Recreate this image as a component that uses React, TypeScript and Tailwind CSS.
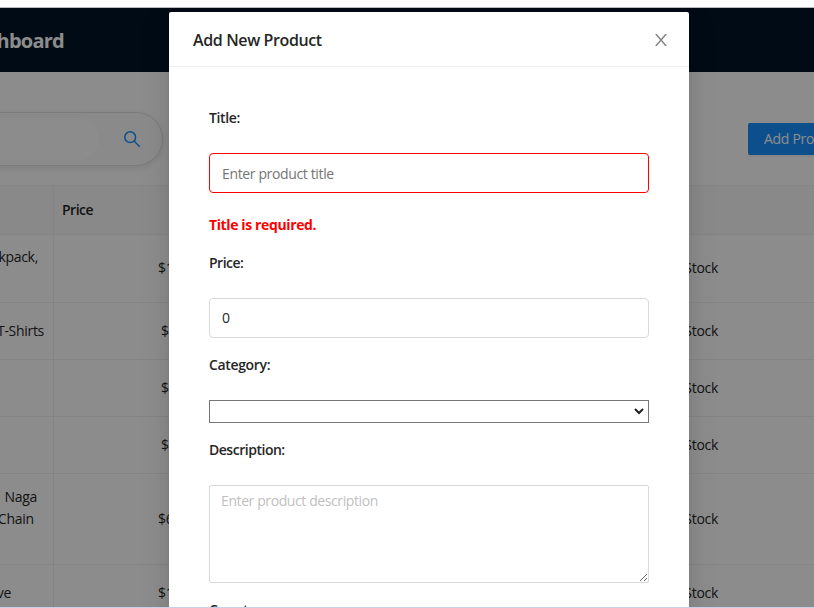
import React from "react";

type Row = { height: string; title: string[]; align: string; price: string; pricePad: string };

const rows: Row[] = [
  { height: "h-[69px]", title: ["kpack,", "\u00a0"], align: "pr-[15px]", price: "$109.95", pricePad: "pl-[104px]" },
  { height: "h-[57px]", title: ["T-Shirts"], align: "pr-[9px]", price: "$22.3", pricePad: "pl-[107px]" },
  { height: "h-[57px]", title: [], align: "", price: "$55.99", pricePad: "pl-[107px]" },
  { height: "h-[57px]", title: [], align: "", price: "$15.99", pricePad: "pl-[107px]" },
  { height: "h-[91px]", title: ["Naga", "Chain\u00a0", "\u00a0"], align: "pr-4", price: "$695", pricePad: "pl-[104px]" },
  { height: "h-[57px]", title: ["ve"], align: "pr-[42px]", price: "$168", pricePad: "pl-[104px]" },
];

function Dashboard() {
  return (
    <div className="flex h-[599px] flex-col overflow-hidden bg-white">
      <header className="flex h-16 shrink-0 items-center bg-[#001529]">
        <div className="flex w-16 justify-end pt-0.5 text-[20px] font-bold whitespace-nowrap tracking-[-0.75px] text-white">Dashboard</div>
      </header>
      <div className="flex h-[114px] shrink-0 items-start justify-between pt-10">
        <div className="-ml-10 flex h-[54px] w-[203px] items-center justify-between rounded-full border border-[#dcdfe0] bg-[#fcfcfc] pr-[21px] shadow-[0_2px_6px_rgba(0,0,0,0.1)]">
          <div className="h-[42px] w-[138px] rounded-full bg-white" />
          <svg className="size-[18px]" viewBox="0 0 18 18" fill="none" stroke="#1890ff" strokeWidth="1.5">
            <circle cx="7.2" cy="7.2" r="5.4" />
            <path d="M11.2 11.2 L16.8 16.8" />
          </svg>
        </div>
        <button className="mt-[11px] h-8 w-[66px] overflow-hidden rounded-l-[2px] bg-[#1890ff] pl-4 text-left whitespace-nowrap text-white shadow-[0_2px_0_rgba(0,0,0,0.045)]">
          Add Product
        </button>
      </div>
      <div className="-mt-px flex h-[50px] w-full shrink-0 items-center border-y border-[#f0f0f0] bg-[#fafafa] font-semibold">
        <div className="h-full w-[54px] shrink-0 border-r border-[#f0f0f0]" />
        <div className="pl-2 tracking-[-0.5px]">Price</div>
      </div>
      <div className="-mt-px flex flex-col">
        {rows.map((row, index) => (
          <div key={index} className={`flex shrink-0 items-center border-b border-[#f0f0f0] ${row.height}`}>
            <div className={`flex h-full w-[54px] shrink-0 flex-col items-end justify-center overflow-hidden border-r border-[#f0f0f0] ${row.align}`}>
              {row.title.map((line, i) => (
                <span key={i} className="whitespace-nowrap">{line}</span>
              ))}
            </div>
            <div className={`w-[540px] shrink-0 ${row.pricePad}`}>{row.price}</div>
            <div className="w-[124px] text-right">In Stock</div>
          </div>
        ))}
      </div>
    </div>
  );
}

function ProductModal() {
  return (
    <div className="absolute top-[4px] left-[169px] w-[520px] rounded-t-[2px] bg-white shadow-[0_3px_6px_-4px_rgba(0,0,0,0.12),0_6px_16px_0_rgba(0,0,0,0.08),0_9px_28px_8px_rgba(0,0,0,0.05)]">
      <div className="flex h-[55px] items-center justify-between border-b border-[#f0f0f0] pt-0.5 pr-[22px] pl-6">
        <h2 className="text-[16px] font-semibold tracking-[-0.38px]">Add New Product</h2>
        <svg className="size-3" viewBox="0 0 12 12" fill="none" stroke="#858585" strokeWidth="1.5">
          <path d="M0.8 0 L11.2 12 M11.2 0 L0.8 12" />
        </svg>
      </div>
      <form className="flex h-[600px] flex-col px-10 pt-10">
        <label className="font-semibold tracking-[-0.38px]">Title:</label>
        <input
          className="mt-6 h-10 shrink-0 rounded-[4px] border border-[#ff0000] px-3 tracking-[-0.36px] placeholder:text-[#757575] placeholder:opacity-100 focus:outline-none"
          placeholder="Enter product title"
        />
        <p className="mt-[21px] font-bold tracking-[-0.38px] text-[#ff0000]">Title is required.</p>
        <label className="mt-4 font-semibold tracking-[-0.5px]">Price:</label>
        <input className="mt-6 h-10 shrink-0 rounded-[4px] border border-[#d9d9d9] px-3 pb-0.5 focus:outline-none" defaultValue="0" />
        <label className="mt-4 font-semibold tracking-[-0.35px]">Category:</label>
        <div className="mt-6 flex h-[23px] shrink-0 items-center justify-end border border-[#767676] pr-1">
          <svg className="h-[7px] w-[10px]" viewBox="0 0 10 7" fill="none" stroke="#222" strokeWidth="2">
            <path d="M1 1 L5 5 L9 1" />
          </svg>
        </div>
        <label className="mt-4 font-semibold tracking-[-0.48px]">Description:</label>
        <textarea
          className="mt-6 h-[98px] shrink-0 resize rounded-[2px] border border-[#d9d9d9] px-[11px] py-1 tracking-[-0.4px] placeholder:text-[#bfbfbf] placeholder:opacity-100"
          placeholder="Enter product description"
        />
        <label className="mt-4 font-semibold">Count:</label>
      </form>
    </div>
  );
}

export default function App() {
  return (
    <div className="h-[608px] w-[814px] overflow-hidden bg-white font-['Open_Sans','Noto_Sans',sans-serif] text-[14px] leading-[22px] tracking-[-0.3px] text-[#262626]">
      <div className="h-2 border-b border-[#b9bcc2]" />
      <div className="relative h-[599px] overflow-hidden">
        <Dashboard />
        <div className="absolute inset-0 bg-black/45" />
        <ProductModal />
      </div>
      <div className="h-px bg-[#c9cfe4]" />
    </div>
  );
}
